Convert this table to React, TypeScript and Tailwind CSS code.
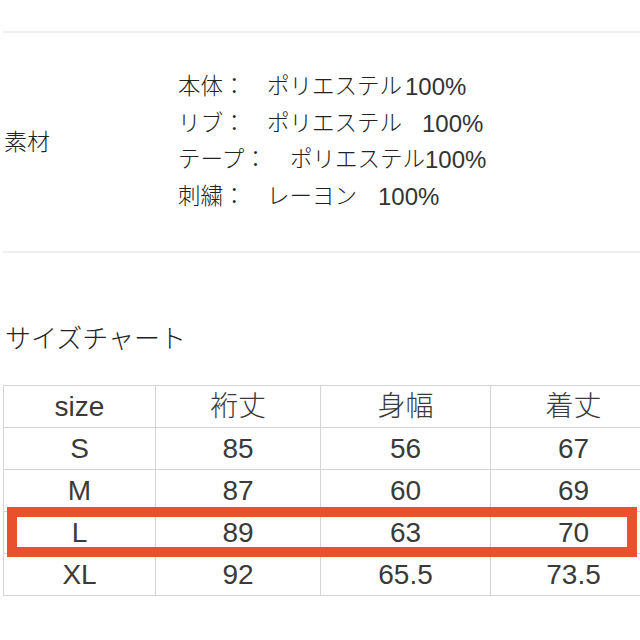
import React from "react";

const font = {
  fontFamily: '"Liberation Sans", "Noto Sans CJK JP", sans-serif',
};

interface IMaterial {
  label: string;
  labelWidth: string;
  name: string;
  nameWidth: string;
}

const materials: IMaterial[] = [
  { label: "本体：", labelWidth: "w-[89px]", name: "ポリエステル", nameWidth: "w-[138px]" },
  { label: "リブ：", labelWidth: "w-[89px]", name: "ポリエステル", nameWidth: "w-[155px]" },
  { label: "テープ：", labelWidth: "w-[112px]", name: "ポリエステル", nameWidth: "w-[135px]" },
  { label: "刺繍：", labelWidth: "w-[89px]", name: "レーヨン", nameWidth: "w-[111px]" },
];

const header = ["size", "裄丈", "身幅", "着丈"];
const rows = [
  ["S", "85", "56", "67"],
  ["M", "87", "60", "69"],
  ["L", "89", "63", "70"],
  ["XL", "92", "65.5", "73.5"],
];
const colWidths = ["w-[152px]", "w-[165px]", "w-[170px]", "w-[166px]"];

export default function App() {
  return (
    <div
      className="relative w-[640px] h-[640px] overflow-hidden bg-white text-[#222]"
      style={font}
    >
      <div className="pt-[31px] pl-[3px]">
        <div className="flex items-center h-[222px] border-t-2 border-b-2 border-[#f0f0f0]">
          <div className="w-[175px] pl-px text-[23px] font-light">素材</div>
          <div className="flex flex-col text-[22.5px] font-light leading-[36.5px]">
            {materials.map((m) => (
              <div key={m.label} className="flex whitespace-nowrap">
                <span className={m.labelWidth}>{m.label}</span>
                <span className={m.nameWidth}>{m.name}</span>
                <span className="text-[24px] text-[#333]">100%</span>
              </div>
            ))}
          </div>
        </div>

        <h2 className="mt-[70px] pl-[2px] text-[26px] leading-[32px] font-light">
          サイズチャート
        </h2>

        <table className="mt-[30px] w-[653px] min-w-[653px] table-fixed border-collapse text-[28px] font-light text-[#3a3a3a]">
          <colgroup>
            {colWidths.map((w) => (
              <col key={w} className={w} />
            ))}
          </colgroup>
          <tbody>
            {[header, ...rows].map((row, i) => (
              <tr key={i} className="h-[42px]">
                {row.map((cell, j) => (
                  <td
                    key={j}
                    className="border border-[#d4d4d4] text-center leading-none p-0"
                  >
                    {cell}
                  </td>
                ))}
              </tr>
            ))}
          </tbody>
        </table>
      </div>

      {/* highlight for size L */}
      <div className="absolute left-[7px] top-[507px] w-[630px] h-[50px] border-[10px] border-[#e9502d]" />
    </div>
  );
}
